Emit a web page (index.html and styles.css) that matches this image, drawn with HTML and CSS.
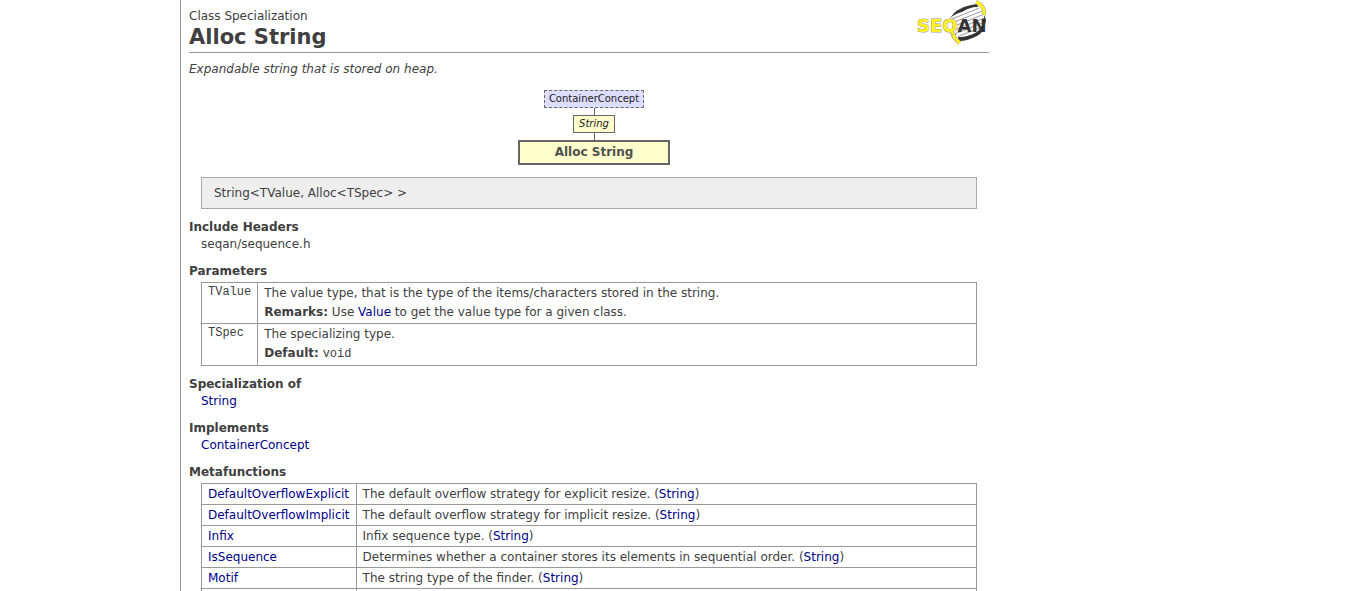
FILE: index.html
```html
<!DOCTYPE html>
<html lang="en">
<head>
<meta charset="utf-8">
<title>Alloc String</title>
<link rel="stylesheet" href="styles.css">
</head>
<body>
<main class="page">
  <header class="page-header">
    <div class="heading">
      <p class="kind">Class Specialization</p>
      <h1 class="title">Alloc String</h1>
    </div>
    <svg class="logo" viewBox="0 0 72 46" role="img" aria-label="SeqAn">
      <defs>
        <clipPath id="lens"><path d="M35 18C38 12 46 6 58 5L66 12C69 22 66 30 60 35C54 38 48 40 43 39L36 31Z"/></clipPath>
      </defs>
      <g clip-path="url(#lens)" fill="none" stroke="#999" stroke-width="1">
        <path d="M30 17L70 1M30 21L70 5M30 25L70 9M30 29L70 13M30 33L70 17M30 37L70 21M30 41L70 25M30 45L70 29M30 49L70 33"/>
      </g>
      <path d="M33 19C35 15 38 11 43 9C48 6 54 5 60 4L61 7C54 7 49 9 45 12C40 13 36 15 33 19Z" fill="#333"/>
      <path d="M41 37C48 37 56 35 61 31C65 27 67 22 67 15L69 20C68 27 66 33 60 36C54 39 48 41 42 41Z" fill="#333"/>
      <path d="M59 2C64 4 68 8 67 15M35 32C36 37 39 40 43 43" fill="none" stroke="#999" stroke-width="4"/>
      <path d="M59 2C64 4 68 8 67 15M35 32C36 37 39 40 43 43" fill="none" stroke="#fff022" stroke-width="3"/>
      <text class="logo-text" x="0" y="32"><tspan class="logo-seq">SEQ</tspan><tspan class="logo-an">AN</tspan></text>
    </svg>
  </header>

  <p class="summary">Expandable string that is stored on heap.</p>

  <div class="hierarchy">
    <div class="node node-concept">ContainerConcept</div>
    <div class="link-line"></div>
    <div class="node node-class">String</div>
    <div class="link-line"></div>
    <div class="node node-current">Alloc String</div>
  </div>

  <div class="signature">String&lt;TValue, Alloc&lt;TSpec&gt; &gt;</div>

  <section class="section">
    <h2 class="section-title">Include Headers</h2>
    <div class="section-body">seqan/sequence.h</div>
  </section>

  <section class="section">
    <h2 class="section-title">Parameters</h2>
    <table class="grid params">
      <tr>
        <td class="key"><code>TValue</code></td>
        <td>
          <p class="line">The value type, that is the type of the items/characters stored in the string.</p>
          <p class="line"><b>Remarks:</b> Use <a href="#">Value</a> to get the value type for a given class.</p>
        </td>
      </tr>
      <tr>
        <td class="key"><code>TSpec</code></td>
        <td>
          <p class="line">The specializing type.</p>
          <p class="line"><b>Default:</b> <code>void</code></p>
        </td>
      </tr>
    </table>
  </section>

  <section class="section">
    <h2 class="section-title">Specialization of</h2>
    <div class="section-body"><a href="#">String</a></div>
  </section>

  <section class="section">
    <h2 class="section-title">Implements</h2>
    <div class="section-body"><a href="#">ContainerConcept</a></div>
  </section>

  <section class="section">
    <h2 class="section-title">Metafunctions</h2>
    <table class="grid">
      <tr><td class="key"><a href="#">DefaultOverflowExplicit</a></td><td>The default overflow strategy for explicit resize. (<a href="#">String</a>)</td></tr>
      <tr><td class="key"><a href="#">DefaultOverflowImplicit</a></td><td>The default overflow strategy for implicit resize. (<a href="#">String</a>)</td></tr>
      <tr><td class="key"><a href="#">Infix</a></td><td>Infix sequence type. (<a href="#">String</a>)</td></tr>
      <tr><td class="key"><a href="#">IsSequence</a></td><td>Determines whether a container stores its elements in sequential order. (<a href="#">String</a>)</td></tr>
      <tr><td class="key"><a href="#">Motif</a></td><td>The string type of the finder. (<a href="#">String</a>)</td></tr>
      <tr><td class="key"></td><td></td></tr>
    </table>
  </section>
</main>
</body>
</html>
```
FILE: styles.css
```css
body {
  margin: 0;
  background: #fff;
  color: #404040;
  font: 12px/17px Verdana, "DejaVu Sans", sans-serif;
}
p, h1, h2 { margin: 0; }
a { color: #00008b; text-decoration: none; }
code { font: 12px/15px "Courier New", "Liberation Mono", monospace; }

.page {
  box-sizing: border-box;
  max-width: 809px;
  min-height: 100vh;
  margin-left: 180px;
  padding-left: 8px;
  border-left: 1px solid #999;
}

.page-header {
  display: flex;
  justify-content: space-between;
  align-items: flex-start;
  height: 52px;
  border-bottom: 1px solid #999;
}
.heading { padding-top: 8px; }
.title { font-size: 21px; line-height: 24px; }
.logo { width: 72px; height: 46px; }
.logo-text {
  font: bold 18px Verdana, "DejaVu Sans", sans-serif;
  paint-order: stroke;
}
.logo-seq { fill: #fff022; stroke: #999; stroke-width: 1px; }
.logo-an { fill: #333; }

.summary { padding-top: 8px; font-style: italic; }

.hierarchy {
  display: flex;
  flex-direction: column;
  align-items: center;
  margin: 12px 0;
  padding-left: 10px;
}
.node {
  border: 1px solid #666;
  background: #ffffcc;
  padding: 0 5px;
  color: #222;
  font-size: 10px;
  line-height: 16px;
}
.node-concept { padding: 0 4px; border-style: dashed; background: #ddddff; }
.node-class { font-style: italic; }
.node-current {
  border-width: 2px;
  padding: 0 35px;
  color: #505050;
  font-size: 12px;
  font-weight: bold;
  line-height: 21px;
}
.link-line { width: 1px; height: 7px; background: #666; }

.signature {
  margin: 0 12px 10px;
  padding: 7px 12px;
  border: 1px solid #aaa;
  background: #eee;
  line-height: 16px;
}

.section { margin-bottom: 10px; }
.section-title { font-size: 12px; line-height: 17px; }
.section-body { margin-left: 12px; }

.grid {
  width: calc(100% - 24px);
  margin: 2px 12px 0;
  border-collapse: collapse;
}
.grid td {
  height: 14px;
  padding: 3px 6px;
  border: 1px solid #999;
  line-height: 14px;
  vertical-align: top;
}
.grid .key { width: 1px; white-space: nowrap; }
.params td { padding: 1px 6px; }
.params tr:last-child td { padding-bottom: 2px; }
.params .line { line-height: 19px; }
```
